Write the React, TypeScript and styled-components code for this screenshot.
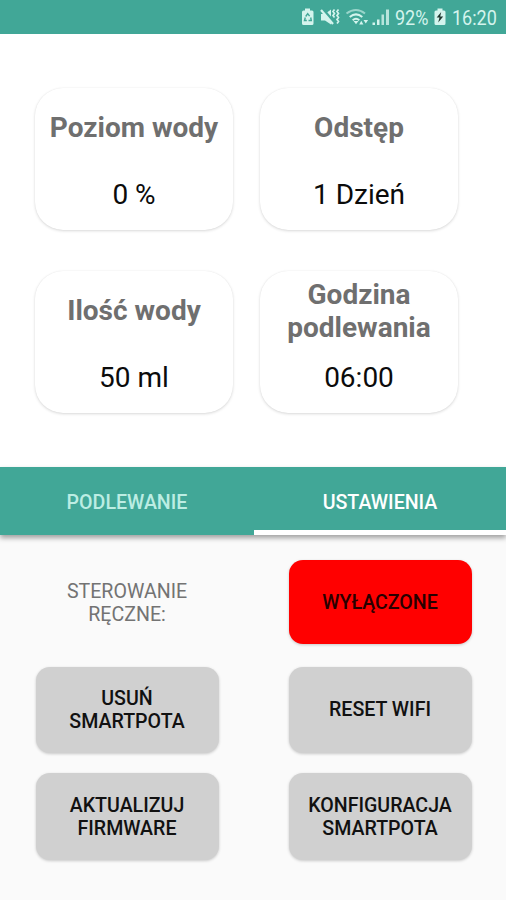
import React from "react";
import styled, { createGlobalStyle } from "styled-components";

const GlobalStyle = createGlobalStyle`
  * { box-sizing: border-box; }
  body { margin: 0; background: #fafafa; font-family: Roboto, sans-serif; }
`;

const Screen = styled.main`
  display: flex;
  flex-direction: column;
  width: 506px;
  height: 900px;
  overflow: hidden;
  background: #fafafa;
`;

const StatusBar = styled.header`
  display: flex;
  flex: none;
  align-items: center;
  justify-content: flex-end;
  height: 34px;
  padding: 2px 9px 0 0;
  background: #41a797;
  color: #d4f4ed;
`;

const StatusIcons = styled.svg`
  display: block;
  flex: none;
  fill: currentColor;
`;

const StatusText = styled.span<{ $width: number }>`
  width: ${(p) => p.$width}px;
  font-size: 20px;
  line-height: 24px;
  white-space: nowrap;
  transform: scaleX(0.9);
  transform-origin: left center;
`;

const Summary = styled.section`
  display: grid;
  flex: none;
  grid-template-columns: 198px 198px;
  grid-auto-rows: 142px;
  gap: 41px 27px;
  height: 433px;
  padding: 54px 0 0 35px;
  background: #fff;
`;

const Card = styled.article`
  display: grid;
  grid-template-rows: 79px 54px;
  align-items: center;
  border-radius: 28px;
  background: #fff;
  box-shadow: 0 1px 3px rgba(0, 0, 0, 0.15), 0 0 1px rgba(0, 0, 0, 0.08);
  text-align: center;
  font-size: 28px;
  line-height: 33px;
`;

const CardTitle = styled.h2`
  margin: 0;
  color: #6f6f6f;
  font-size: inherit;
  font-weight: 700;
`;

const CardValue = styled.p`
  margin: 0;
  color: #0b0b0b;
`;

const Tabs = styled.nav`
  z-index: 1;
  display: grid;
  flex: none;
  grid-template-columns: 254px 252px;
  height: 68px;
  background: #41a797;
  box-shadow: 0 3px 5px rgba(0, 0, 0, 0.36);
`;

const Tab = styled.button<{ $active?: boolean }>`
  padding: ${(p) => (p.$active ? "7px 0 0" : "2px 0 0")};
  border: 0;
  border-bottom: ${(p) => (p.$active ? "5px solid #fff" : "0")};
  background: transparent;
  color: ${(p) => (p.$active ? "#fff" : "#bcede3")};
  font: 500 19.6px/23px Roboto, sans-serif;
`;

const Settings = styled.section`
  display: grid;
  grid-template-columns: 183px 183px;
  grid-template-rows: 84px 23px 86px 20px 87px;
  column-gap: 70px;
  align-content: start;
  padding: 25px 0 0 35.5px;
`;

const ControlLabel = styled.p`
  grid-area: 1 / 1;
  align-self: center;
  margin: 2px 0 0;
  color: #737373;
  font-size: 19.6px;
  line-height: 23px;
  text-align: center;
`;

const ActionButton = styled.button<{ $row: number; $column: number; $off?: boolean }>`
  grid-area: ${(p) => p.$row} / ${(p) => p.$column};
  padding: 0 8px ${(p) => (p.$row === 3 ? "1px" : "0")};
  border: 0;
  border-radius: 14px;
  background: ${(p) => (p.$off ? "#ff0000" : "#d0d0d0")};
  color: ${(p) => (p.$off ? "#280000" : "#111")};
  box-shadow: 0 1px 3px rgba(0, 0, 0, 0.2);
  font: 500 19.6px/23px Roboto, sans-serif;
  white-space: pre-line;
`;

const readings = [
  { title: "Poziom wody", value: "0 %" },
  { title: "Odstęp", value: "1 Dzień" },
  { title: "Ilość wody", value: "50 ml" },
  { title: "Godzina podlewania", value: "06:00" },
];

const actions = [
  { label: "USUŃ\nSMARTPOTA", row: 3, column: 1 },
  { label: "RESET WIFI", row: 3, column: 2 },
  { label: "AKTUALIZUJ\nFIRMWARE", row: 5, column: 1 },
  { label: "KONFIGURACJA\nSMARTPOTA", row: 5, column: 2 },
];

function DeviceIcons() {
  return (
    <StatusIcons width="94" height="22" viewBox="0 0 94 22" aria-hidden="true">
      <path d="M4 1.500h5v2h2q1.500 0 1.500 1.500v11.500q0 1.500-1.500 1.500H2.500Q1 18 1 16.500V5q0-1.500 1.500-1.500H4z" />
      <path
        d="M4.700 9.500 6.700 6.700l1.900 2.500M9.700 10.500l.6 3H7.500M5.800 13.500H3.500l.8-3"
        fill="none"
        stroke="#41a797"
        strokeWidth="1.400"
      />
      <path d="M20 7h4l6-4.500v15L24 13.500h-4z" />
      <path d="m21.500 2 12 14" fill="none" stroke="#41a797" strokeWidth="3" />
      <path d="m20 3 12 14" fill="none" stroke="currentColor" strokeWidth="2.200" />
      <path
        d="m33.500 2.500-1.500 2 1.500 2-1.500 2 1.500 2M37.500 2.500l-1.500 2 1.500 2-1.500 2 1.500 2-1.500 2 1.500 2-1.500 2"
        fill="none"
        stroke="currentColor"
        strokeWidth="1.700"
      />
      <g fill="none" stroke="currentColor" strokeWidth="2">
        <path d="M45.500 6.500q9.500-7 18.500 0" opacity=".6" />
        <path d="M48.700 10q6.300-5.300 12.600 0" />
        <path d="M51.700 13.300q3.300-3 6.600 0" />
      </g>
      <path d="m52.500 14 2.500 3.200 2.500-3.200zM58.200 17.500l2.100-3.700 2.100 3.700zM62.500 13h4.600l-2.300 3.600z" />
      <path d="M71.500 15.500H74V18h-2.500zM76 12.500h2.500V18H76z" />
      <path d="M80.500 7.500H83V18h-2.500zM85 2.500h3V18h-3z" opacity=".8" />
    </StatusIcons>
  );
}

function ChargingBattery() {
  return (
    <StatusIcons width="24" height="22" viewBox="0 0 24 22" aria-hidden="true">
      <path d="M9.500 1.500h5v2h1.500q1.500 0 1.500 1.500v11.500q0 1.500-1.500 1.500H8q-1.500 0-1.500-1.500V5Q6.500 3.500 8 3.500h1.500z" />
      <path d="m13.200 5-4.500 5.500h2.800L10.200 15.500l5-6h-3z" fill="#20372f" />
    </StatusIcons>
  );
}

export default function App() {
  return (
    <Screen>
      <GlobalStyle />
      <StatusBar>
        <DeviceIcons />
        <StatusText $width={33}>92%</StatusText>
        <ChargingBattery />
        <StatusText $width={45}>16:20</StatusText>
      </StatusBar>
      <Summary>
        {readings.map((r) => (
          <Card key={r.title}>
            <CardTitle>{r.title}</CardTitle>
            <CardValue>{r.value}</CardValue>
          </Card>
        ))}
      </Summary>
      <Tabs>
        <Tab>PODLEWANIE</Tab>
        <Tab $active>USTAWIENIA</Tab>
      </Tabs>
      <Settings>
        <ControlLabel>
          STEROWANIE
          <br />
          RĘCZNE:
        </ControlLabel>
        <ActionButton $row={1} $column={2} $off>
          WYŁĄCZONE
        </ActionButton>
        {actions.map((a) => (
          <ActionButton key={a.label} $row={a.row} $column={a.column}>
            {a.label}
          </ActionButton>
        ))}
      </Settings>
    </Screen>
  );
}
